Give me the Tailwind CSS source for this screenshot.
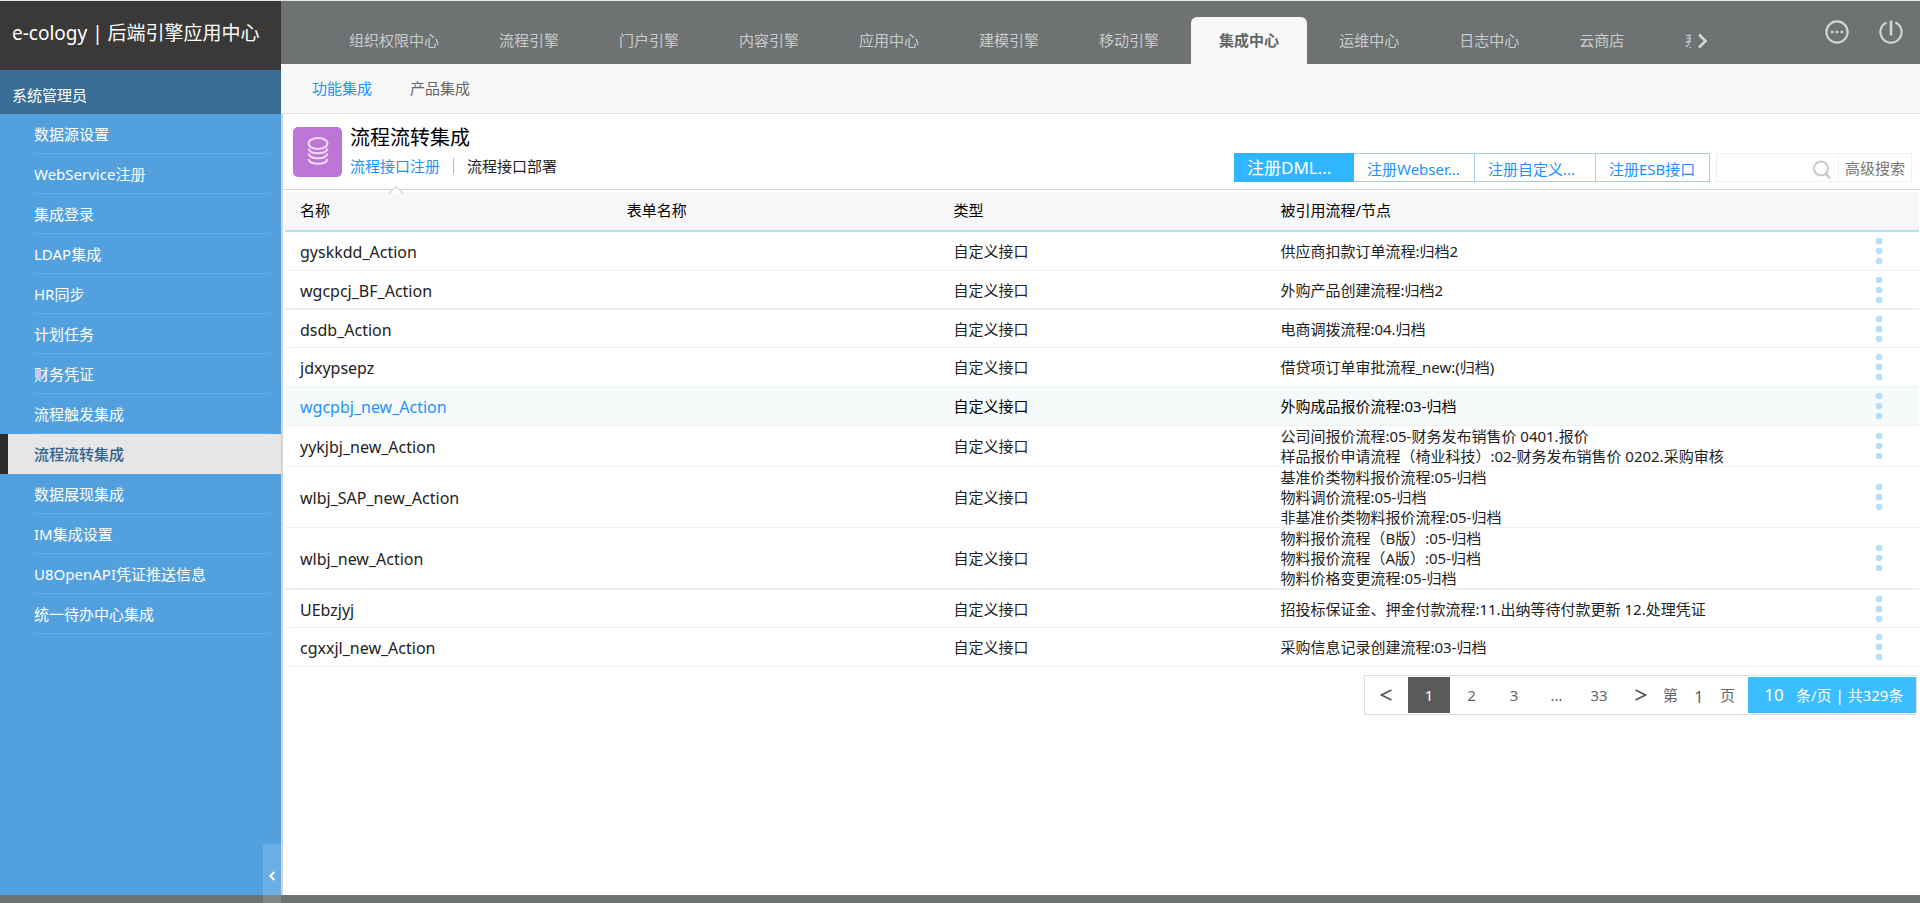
<!DOCTYPE html>
<html lang="zh-CN">
<head>
<meta charset="utf-8">
<meta name="viewport" content="width=device-width, initial-scale=1">
<title>e-cology | 后端引擎应用中心</title>
<script src="https://cdn.jsdelivr.net/npm/@tailwindcss/browser@4"></script>
</head>
<body class="min-h-screen flex flex-col bg-white font-['Noto_Sans','Noto_Sans_CJK_SC',sans-serif] text-[15px] leading-5 text-[#222] border-t border-[#dfe9e8] whitespace-nowrap">
<div class="flex grow">
  <aside class="w-[281px] shrink-0 bg-[#52a0de] text-white flex flex-col">
    <div class="h-[69px] bg-[#3a3937] px-3 pt-[18px] text-[19px] leading-7">e-cology | 后端引擎应用中心</div>
    <div class="h-11 bg-[#3a6d97] px-3 pt-[15px]">系统管理员</div>
    <nav class="flex flex-col">
      <a href="#" class="h-10 pl-[34px] pr-3 block"><span class="h-10 flex items-center border-b border-[#63ade9]">数据源设置</span></a>
      <a href="#" class="h-10 pl-[34px] pr-3 block"><span class="h-10 flex items-center border-b border-[#63ade9]">WebService注册</span></a>
      <a href="#" class="h-10 pl-[34px] pr-3 block"><span class="h-10 flex items-center border-b border-[#63ade9]">集成登录</span></a>
      <a href="#" class="h-10 pl-[34px] pr-3 block"><span class="h-10 flex items-center border-b border-[#63ade9]">LDAP集成</span></a>
      <a href="#" class="h-10 pl-[34px] pr-3 block"><span class="h-10 flex items-center border-b border-[#63ade9]">HR同步</span></a>
      <a href="#" class="h-10 pl-[34px] pr-3 block"><span class="h-10 flex items-center border-b border-[#63ade9]">计划任务</span></a>
      <a href="#" class="h-10 pl-[34px] pr-3 block"><span class="h-10 flex items-center border-b border-[#63ade9]">财务凭证</span></a>
      <a href="#" class="h-10 pl-[34px] pr-3 block"><span class="h-10 flex items-center border-b border-[#63ade9]">流程触发集成</span></a>
      <a href="#" aria-current="page" class="h-10 pl-[26px] pr-3 flex items-center border-l-8 border-[#2c2c2a] bg-[#e6e6e6] text-[#2f638f] font-medium">流程流转集成</a>
      <a href="#" class="h-10 pl-[34px] pr-3 block"><span class="h-10 flex items-center border-b border-[#63ade9]">数据展现集成</span></a>
      <a href="#" class="h-10 pl-[34px] pr-3 block"><span class="h-10 flex items-center border-b border-[#63ade9]">IM集成设置</span></a>
      <a href="#" class="h-10 pl-[34px] pr-3 block"><span class="h-10 flex items-center border-b border-[#63ade9]">U8OpenAPI凭证推送信息</span></a>
      <a href="#" class="h-10 pl-[34px] pr-3 block"><span class="h-10 flex items-center border-b border-[#63ade9]">统一待办中心集成</span></a>
    </nav>
  </aside>

  <div class="grow min-w-0 flex flex-col">
    <header class="h-[63px] bg-[#6e7272] text-[#c9cbcb] flex items-end">
      <nav class="flex gap-1 ml-10 w-[1370px] min-w-0 overflow-hidden">
        <a href="#" class="h-[47px] px-7 pb-[2px] flex items-center shrink-0">组织权限中心</a>
        <a href="#" class="h-[47px] px-7 pb-[2px] flex items-center shrink-0">流程引擎</a>
        <a href="#" class="h-[47px] px-7 pb-[2px] flex items-center shrink-0">门户引擎</a>
        <a href="#" class="h-[47px] px-7 pb-[2px] flex items-center shrink-0">内容引擎</a>
        <a href="#" class="h-[47px] px-7 pb-[2px] flex items-center shrink-0">应用中心</a>
        <a href="#" class="h-[47px] px-7 pb-[2px] flex items-center shrink-0">建模引擎</a>
        <a href="#" class="h-[47px] px-7 pb-[2px] flex items-center shrink-0">移动引擎</a>
        <a href="#" aria-current="page" class="h-[47px] px-7 pb-[2px] flex items-center shrink-0 rounded-t-md bg-[#f7f7f7] text-[#5f6464] font-bold">集成中心</a>
        <a href="#" class="h-[47px] px-7 pb-[2px] flex items-center shrink-0">运维中心</a>
        <a href="#" class="h-[47px] px-7 pb-[2px] flex items-center shrink-0">日志中心</a>
        <a href="#" class="h-[47px] px-7 pb-[2px] flex items-center shrink-0">云商店</a>
        <a href="#" class="h-[47px] px-7 pb-[2px] flex items-center shrink-0">系统设置</a>
      </nav>
      <button aria-label="更多标签" class="h-[47px] px-1 flex items-center"><svg class="w-4 h-4" viewBox="0 0 16 16" fill="none" stroke="#d5d7d7" stroke-width="2.6"><path d="M4 1.5 10.500 8 4 14.500"/></svg></button>
      <div class="ml-auto mr-[17px] h-full pt-[19px] flex gap-[30px] items-start">
        <button aria-label="更多"><svg class="w-6 h-6" viewBox="0 0 24 24" fill="none" stroke="#d2d4d4" stroke-width="2.200"><circle cx="12" cy="12" r="10.600"/><path d="M5.800 12h2.600M10.700 12h2.600M15.600 12h2.600" stroke-width="2.600"/></svg></button>
        <button aria-label="退出"><svg class="w-6 h-6" viewBox="0 0 24 24" fill="none" stroke="#d2d4d4" stroke-width="2.200"><path d="M7.500 2.400a10.600 10.600 0 1 0 9 0"/><path d="M12 0.500v15" stroke-width="2.600"/></svg></button>
      </div>
    </header>
    <nav class="h-[50px] bg-[#f7f7f7] border-b border-[#e3e3e3] flex items-center gap-[38px] pl-[31px] pb-[2px] text-[#666]">
      <a href="#" class="text-[#1e90ff]">功能集成</a>
      <a href="#">产品集成</a>
    </nav>

    <main class="grow border-l-2 border-[#d4d4d4] flex flex-col">
      <div class="relative h-[76px] border-b border-[#d6d6d6] flex items-start pl-[10px] pr-2">
        <svg class="w-[49px] h-[50px] mt-[13px] shrink-0" viewBox="0 0 49 50" fill="none" stroke="#f0dcf6" stroke-width="2"><rect width="49" height="50" rx="5" fill="#bd76d8" stroke="none"/><ellipse cx="25" cy="16.500" rx="9.500" ry="5.500"/><path d="M15.500 21.500c1.500 6.400 17.500 6.400 19 0M15.500 26.500c1.500 6.400 17.500 6.400 19 0M15.500 32c1.500 6.400 17.500 6.400 19 0"/></svg>
        <div class="ml-2 pt-[10px]">
          <h1 class="text-xl leading-7 text-black">流程流转集成</h1>
          <div class="flex items-center pt-1">
            <a href="#" class="text-[#1e90ff]">流程接口注册</a>
            <span class="w-px h-4 bg-[#bbb] mx-[13px]"></span>
            <a href="#" class="text-[#222]">流程接口部署</a>
          </div>
        </div>
        <svg class="absolute left-[105px] top-[71px] w-4 h-[9px]" viewBox="0 0 16 9"><path d="M1 8.500 8 1.500 15 8.500" fill="#fff" stroke="#d9d9d9" stroke-width="1.500"/></svg>
        <div class="ml-auto mt-[39px] flex h-[29px] text-[#1e90ff]">
          <button class="w-[120px] bg-[#30b5ff] text-white text-[17px] pl-[13px] text-left">注册DML...</button>
          <button class="w-[121px] border-y border-r border-[#a9cbf0] pl-[13px] pt-[3px] text-left">注册Webser...</button>
          <button class="w-[121px] border-y border-r border-[#a9cbf0] pl-[13px] pt-[3px] text-left">注册自定义...</button>
          <button class="w-[114px] border-y border-r border-[#a9cbf0] pl-[13px] pt-[3px] text-left">注册ESB接口</button>
          <label class="w-[123px] ml-[6px] border border-[#f0f0f0] flex items-center pr-[6px]">
            <input type="text" aria-label="搜索" class="w-0 grow outline-none">
            <svg class="w-5 h-5 mt-1" viewBox="0 0 20 20" fill="none" stroke="#c9c9c9" stroke-width="2"><circle cx="9" cy="8.500" r="7"/><path d="m14 14 4 4.500" stroke-width="2.500"/></svg>
          </label>
          <button class="w-[73px] border-y border-r border-[#f0f0f0] text-[#777]">高级搜索</button>
        </div>
      </div>

      <div class="pl-[2px] pr-px pt-[2px]">
        <table class="w-full table-fixed border-separate border-spacing-0 text-left">
          <colgroup><col class="w-1/5"><col class="w-1/5"><col class="w-1/5"><col class="w-1/5"><col class="w-1/5"></colgroup>
          <thead>
            <tr class="h-10 bg-[#f7f7f7] text-black [&>th]:font-normal [&>th]:border-b-2 [&>th]:border-[#b3e0fb] [&>th]:pt-0 [&>th]:pb-[2px] [&>th]:pl-[15px]">
              <th>名称</th><th>表单名称</th><th>类型</th><th>被引用流程/节点</th><th aria-label="操作"></th>
            </tr>
          </thead>
          <tbody class="[&_td]:border-b [&_td]:border-[#f0f0f0] [&_td]:py-0 [&_td]:pl-[15px] [&_td:first-child]:text-base [&_td:first-child]:leading-5 [&_td:first-child]:pt-[2px] [&_button]:block [&_button]:ml-auto [&_button]:mr-[36px] [&_svg]:w-2 [&_svg]:h-7 [&_svg]:fill-[#b3defc]">
            <tr class="h-[39px]"><td>gyskkdd_Action</td><td></td><td>自定义接口</td><td>供应商扣款订单流程:归档2</td><td><button aria-label="操作"><svg viewBox="0 0 8 28"><circle cx="4" cy="4" r="3.300"/><circle cx="4" cy="14" r="3.300"/><circle cx="4" cy="24" r="3.300"/></svg></button></td></tr>
            <tr class="h-[39px] [&>td]:border-b-2"><td>wgcpcj_BF_Action</td><td></td><td>自定义接口</td><td>外购产品创建流程:归档2</td><td><button aria-label="操作"><svg viewBox="0 0 8 28"><circle cx="4" cy="4" r="3.300"/><circle cx="4" cy="14" r="3.300"/><circle cx="4" cy="24" r="3.300"/></svg></button></td></tr>
            <tr class="h-[38px]"><td>dsdb_Action</td><td></td><td>自定义接口</td><td>电商调拨流程:04.归档</td><td><button aria-label="操作"><svg viewBox="0 0 8 28"><circle cx="4" cy="4" r="3.300"/><circle cx="4" cy="14" r="3.300"/><circle cx="4" cy="24" r="3.300"/></svg></button></td></tr>
            <tr class="h-[39px]"><td>jdxypsepz</td><td></td><td>自定义接口</td><td>借贷项订单审批流程_new:(归档)</td><td><button aria-label="操作"><svg viewBox="0 0 8 28"><circle cx="4" cy="4" r="3.300"/><circle cx="4" cy="14" r="3.300"/><circle cx="4" cy="24" r="3.300"/></svg></button></td></tr>
            <tr class="h-[39px] bg-[#f5fbfb] text-black"><td class="text-[#1e90ff]">wgcpbj_new_Action</td><td></td><td>自定义接口</td><td>外购成品报价流程:03-归档</td><td><button aria-label="操作"><svg viewBox="0 0 8 28"><circle cx="4" cy="4" r="3.300"/><circle cx="4" cy="14" r="3.300"/><circle cx="4" cy="24" r="3.300"/></svg></button></td></tr>
            <tr class="h-[41px]"><td>yykjbj_new_Action</td><td></td><td>自定义接口</td><td>公司间报价流程:05-财务发布销售价 0401.报价<br>样品报价申请流程（椅业科技）:02-财务发布销售价 0202.采购审核</td><td><button aria-label="操作"><svg viewBox="0 0 8 28"><circle cx="4" cy="4" r="3.300"/><circle cx="4" cy="14" r="3.300"/><circle cx="4" cy="24" r="3.300"/></svg></button></td></tr>
            <tr class="h-[61px]"><td>wlbj_SAP_new_Action</td><td></td><td>自定义接口</td><td>基准价类物料报价流程:05-归档<br>物料调价流程:05-归档<br>非基准价类物料报价流程:05-归档</td><td><button aria-label="操作"><svg viewBox="0 0 8 28"><circle cx="4" cy="4" r="3.300"/><circle cx="4" cy="14" r="3.300"/><circle cx="4" cy="24" r="3.300"/></svg></button></td></tr>
            <tr class="h-[62px] [&>td]:border-b-2"><td>wlbj_new_Action</td><td></td><td>自定义接口</td><td>物料报价流程（B版）:05-归档<br>物料报价流程（A版）:05-归档<br>物料价格变更流程:05-归档</td><td><button aria-label="操作"><svg viewBox="0 0 8 28"><circle cx="4" cy="4" r="3.300"/><circle cx="4" cy="14" r="3.300"/><circle cx="4" cy="24" r="3.300"/></svg></button></td></tr>
            <tr class="h-[38px]"><td>UEbzjyj</td><td></td><td>自定义接口</td><td>招投标保证金、押金付款流程:11.出纳等待付款更新 12.处理凭证</td><td><button aria-label="操作"><svg viewBox="0 0 8 28"><circle cx="4" cy="4" r="3.300"/><circle cx="4" cy="14" r="3.300"/><circle cx="4" cy="24" r="3.300"/></svg></button></td></tr>
            <tr class="h-[39px]"><td>cgxxjl_new_Action</td><td></td><td>自定义接口</td><td>采购信息记录创建流程:03-归档</td><td><button aria-label="操作"><svg viewBox="0 0 8 28"><circle cx="4" cy="4" r="3.300"/><circle cx="4" cy="14" r="3.300"/><circle cx="4" cy="24" r="3.300"/></svg></button></td></tr>
          </tbody>
        </table>
      </div>

      <div class="flex justify-end pt-2 pr-[3px]">
        <div class="h-10 border border-[#ddd] flex items-stretch py-px text-[#666]">
          <button aria-label="上一页" class="w-[43px] flex items-center justify-center"><svg class="w-3 h-3" viewBox="0 0 12 12" fill="none" stroke="#555" stroke-width="1.600"><path d="M11.500 1 1.500 6l10 5"/></svg></button>
          <button class="w-[42px] bg-[#5a5a5a] text-white">1</button>
          <button class="w-[43px]">2</button>
          <button class="w-[42px]">3</button>
          <span class="w-[43px] flex items-center justify-center">...</span>
          <button class="w-[42px]">33</button>
          <button aria-label="下一页" class="w-[43px] flex items-center justify-center"><svg class="w-3 h-3" viewBox="0 0 12 12" fill="none" stroke="#555" stroke-width="1.600"><path d="M.5 1l10 5-10 5"/></svg></button>
          <label class="flex items-center pr-[13px]">第<input type="text" value="1" class="w-[42px] pt-1 text-center text-[17px] outline-none">页</label>
          <label class="w-[168px] bg-[#3bbeff] text-white flex items-center pl-[10px]"><input type="text" value="10" class="w-8 mr-[6px] text-center text-[17px] outline-none"><span>条/页 | 共329条</span></label>
        </div>
      </div>
    </main>
  </div>
</div>
<footer class="relative h-2 bg-[#6e7272]">
  <button aria-label="收起菜单" class="absolute bottom-0 left-[263px] w-[18px] h-[59px] pt-1 bg-white/15 flex items-center justify-center"><svg class="w-[6px] h-[10px]" viewBox="0 0 6 10" fill="none" stroke="#fff" stroke-width="2"><path d="M5.300 1 1.300 5l4 4"/></svg></button>
</footer>
</body>
</html>
